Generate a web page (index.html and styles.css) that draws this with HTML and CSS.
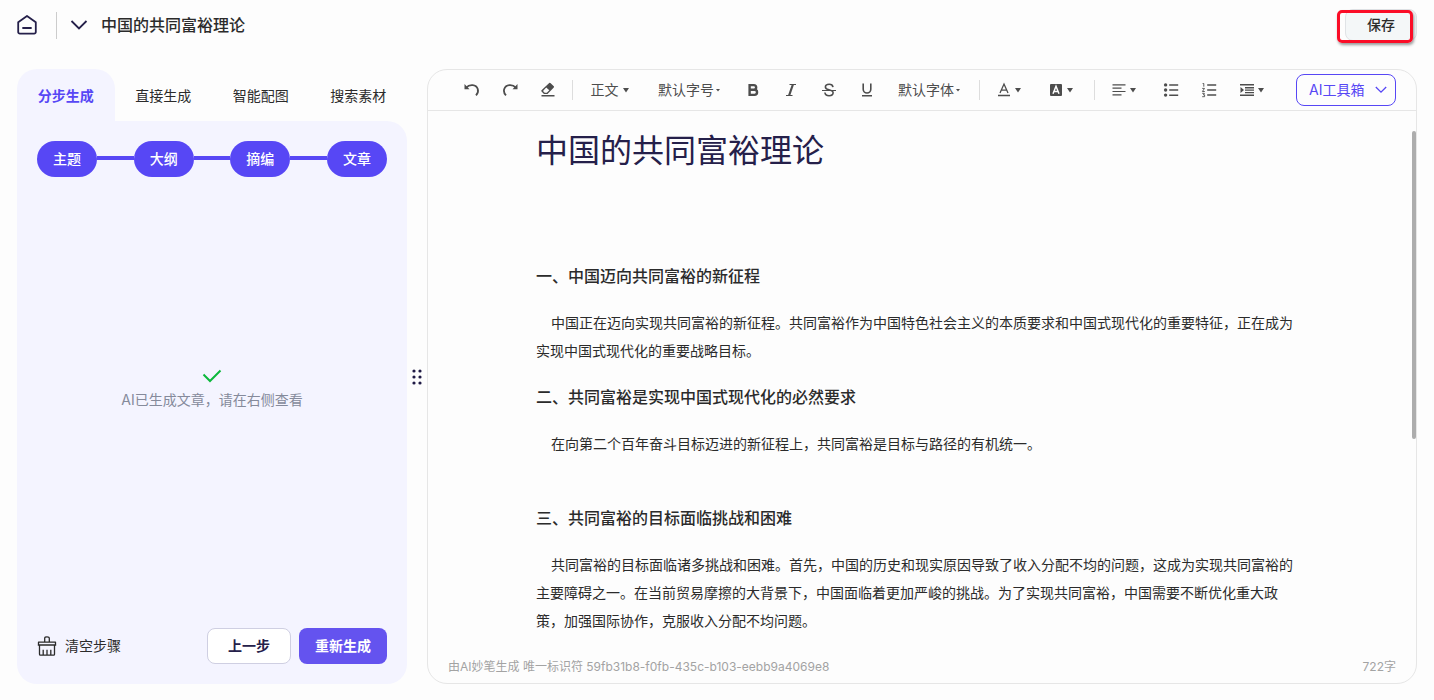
FILE: index.html
```html
<!DOCTYPE html>
<html lang="zh-CN">
<head>
<meta charset="utf-8">
<title>中国的共同富裕理论</title>
<link rel="stylesheet" href="styles.css">
</head>
<body>
<header class="topbar">
  <button class="icon-btn" type="button" aria-label="首页">
    <svg width="20" height="20" viewBox="0 0 20 20" fill="none" stroke="#25204a" stroke-width="1.8" stroke-linejoin="round" stroke-linecap="round"><path d="M1.2 7.3 10 1l8.800 6.300V17a1.600 1.600 0 0 1-1.600 1.600H2.800A1.600 1.600 0 0 1 1.200 17z"/><path d="M6 13h8"/></svg>
  </button>
  <span class="topbar-line"></span>
  <button class="icon-btn" type="button" aria-label="展开">
    <svg width="18" height="12" viewBox="0 0 18 12" fill="none" stroke="#25204a" stroke-width="1.800"><path d="M1.500 2 9 9.500 16.500 2"/></svg>
  </button>
  <h1 class="topbar-title">中国的共同富裕理论</h1>
  <button class="save" type="button">保存<span class="save-mark"></span></button>
</header>

<main class="workspace">
  <section class="side">
    <nav class="tabs">
      <button class="tab tab-active" type="button">分步生成</button>
      <button class="tab" type="button">直接生成</button>
      <button class="tab" type="button">智能配图</button>
      <button class="tab" type="button">搜索素材</button>
    </nav>
    <div class="side-body">
      <div class="steps">
        <button class="step" type="button">主题</button><span class="step-link"></span>
        <button class="step" type="button">大纲</button><span class="step-link"></span>
        <button class="step" type="button">摘编</button><span class="step-link"></span>
        <button class="step" type="button">文章</button>
      </div>
      <div class="status">
        <svg width="20" height="14" viewBox="0 0 20 14" fill="none" stroke="#0cb83c" stroke-width="2"><path d="M1.500 5.500 8 12 18.500 1.500"/></svg>
        <p class="status-text">AI已生成文章，请在右侧查看</p>
      </div>
      <div class="actions">
        <button class="clear" type="button">
          <svg width="20" height="20" viewBox="0 0 20 20" fill="none" stroke="#2b2b2b" stroke-width="1.300" stroke-linejoin="round"><path d="M7.700 6V2.200Q7.700.8 10 .8t2.300 1.400V6"/><path d="M1.500 9V6.200h17V9M.800 9h18.400M2.500 9v9.300q0 .9.900.9h13.200q.9 0 .9-.9V9M6.200 19v-5.200M10 19v-5.200M13.800 19v-5.200"/></svg>
          <span>清空步骤</span>
        </button>
        <button class="btn btn-plain" type="button">上一步</button>
        <button class="btn btn-main" type="button">重新生成</button>
      </div>
    </div>
  </section>

  <div class="handle">
    <svg width="12" height="16" viewBox="0 0 12 16" fill="#1f1a45"><circle cx="3" cy="2" r="1.600"/><circle cx="9" cy="2" r="1.600"/><circle cx="3" cy="8" r="1.600"/><circle cx="9" cy="8" r="1.600"/><circle cx="3" cy="14" r="1.600"/><circle cx="9" cy="14" r="1.600"/></svg>
  </div>

  <section class="editor">
    <div class="toolbar">
      <button class="tool" type="button" aria-label="撤销"><svg width="16" height="16" viewBox="0 0 16 16" fill="none" stroke="#4d4d4d" stroke-width="1.800"><path d="M2 5.800C4 3.600 6.300 3 8.600 3.200c5.400.5 7.200 6.200 3.400 10.200"/><path d="M.5 2v5.200h5z" fill="#4d4d4d" stroke="none"/></svg></button>
      <button class="tool" type="button" aria-label="重做"><svg width="16" height="16" viewBox="0 0 16 16" fill="none" stroke="#4d4d4d" stroke-width="1.800"><path d="M14 5.800C12 3.600 9.700 3 7.400 3.200 2 3.700.200 9.400 4 13.400"/><path d="M15.500 2v5.200h-5z" fill="#4d4d4d" stroke="none"/></svg></button>
      <button class="tool" type="button" aria-label="清除格式"><svg width="16" height="16" viewBox="0 0 16 16" fill="#4d4d4d"><path fill-rule="evenodd" d="M9.200.900q.6-.5 1.200 0l3.400 3.300q.5.600 0 1.200L7.500 12H4L1.500 9.500q-.5-.6 0-1.200zM6.200 5.600 3 8.900l1.700 1.800h2.100l2.500-2.400z"/><path d="M1.500 13h13v1.600h-13z"/></svg></button>
      <span class="tool-line"></span>
      <button class="tool tool-text" type="button">正文<svg width="8" height="5" viewBox="0 0 8 5" fill="#4d4d4d"><path d="M1 0h6L4 4.500z"/></svg></button>
      <button class="tool tool-size" type="button">默认字号<svg width="4" height="3" viewBox="0 0 4 3" fill="#4d4d4d"><path d="M0 0h4L2 2.500z"/></svg></button>
      <button class="tool" type="button" aria-label="加粗"><svg width="16" height="16" viewBox="0 0 16 16" fill="none" stroke="#4d4d4d" stroke-width="2.400"><path d="M4.600 3.100h4.200a2.300 2.300 0 0 1 0 4.700H4.600zM4.600 7.800h4.900a2.500 2.500 0 0 1 0 5.100H4.600z"/></svg></button>
      <button class="tool" type="button" aria-label="斜体"><svg width="16" height="16" viewBox="0 0 16 16" fill="none" stroke="#4d4d4d"><path d="M6.500 2.500h6.500M3 13.500h6.500" stroke-width="1.200"/><path d="M9.900 2.500 6.100 13.500" stroke-width="2.200"/></svg></button>
      <button class="tool" type="button" aria-label="删除线"><svg width="16" height="16" viewBox="0 0 16 16" fill="none" stroke="#4d4d4d" stroke-width="1.600"><path d="M12 5.100C11.700 3.300 10.300 2.300 8.200 2.300c-2.300 0-3.800 1.100-3.800 2.800 0 1.500 1.200 2.200 3.600 2.700 2.700.6 4.100 1.400 4.100 3 0 1.800-1.600 2.900-4 2.900-2.500 0-4-1.200-4.200-3.200"/><path d="M1 8.500h14" stroke-width="1"/></svg></button>
      <button class="tool" type="button" aria-label="下划线"><svg width="16" height="16" viewBox="0 0 16 16" fill="none" stroke="#4d4d4d" stroke-width="1.600"><path d="M4.200 1.500v5.700a3.800 3.800 0 0 0 7.600 0V1.500M3 13.800h10"/></svg></button>
      <button class="tool tool-font" type="button">默认字体<svg width="4" height="3" viewBox="0 0 4 3" fill="#4d4d4d"><path d="M0 0h4L2 2.500z"/></svg></button>
      <span class="tool-line"></span>
      <button class="tool tool-drop" type="button" aria-label="文字颜色"><svg width="14" height="16" viewBox="0 0 14 16" fill="none" stroke="#4d4d4d" stroke-width="1.300"><path d="M3 11 7 2l4 9M4.300 8.200h5.400M1 13.500h12"/></svg><svg width="8" height="5" viewBox="0 0 8 5" fill="#4d4d4d"><path d="M1 0h6L4 4.500z"/></svg></button>
      <button class="tool tool-drop" type="button" aria-label="背景颜色"><svg width="14" height="16" viewBox="0 0 14 16" fill="none"><rect x="1" y="2" width="12" height="12" rx="1" fill="#4d4d4d"/><path d="M4 11.800 7 4.200l3 7.600M5 9.400h4" stroke="#fff" stroke-width="1.500"/></svg><svg width="8" height="5" viewBox="0 0 8 5" fill="#4d4d4d"><path d="M1 0h6L4 4.500z"/></svg></button>
      <span class="tool-line"></span>
      <button class="tool tool-drop" type="button" aria-label="对齐"><svg width="14" height="16" viewBox="0 0 14 16" stroke="#4d4d4d" stroke-width="1.200"><path d="M.500 2.900h13M.500 6.200h9M.500 9.500h13M.500 12.800h9"/></svg><svg width="8" height="5" viewBox="0 0 8 5" fill="#4d4d4d"><path d="M1 0h6L4 4.500z"/></svg></button>
      <button class="tool" type="button" aria-label="无序列表"><svg width="16" height="16" viewBox="0 0 16 16" fill="#4d4d4d"><circle cx="2.600" cy="2.900" r="1.700"/><circle cx="2.600" cy="8" r="1.700"/><circle cx="2.600" cy="13.100" r="1.700"/><path d="M6.200 2.200h9v1.500h-9zM6.200 7.300h9v1.500h-9zM6.200 12.400h9v1.500h-9z"/></svg></button>
      <button class="tool" type="button" aria-label="有序列表"><svg width="16" height="16" viewBox="0 0 16 16" fill="none" stroke="#4d4d4d"><path d="M6.200 2.900h9M6.200 8h9M6.200 13.100h9" stroke-width="1.500"/><path d="M1.600 1.500h1.200v3.200M1.200 6.400h2.300L1.400 9.500h2.400M1.200 11.300h2.200L2.400 12.800h1.200v1.900H1.200" stroke-width=".9"/></svg></button>
      <button class="tool tool-drop" type="button" aria-label="缩进"><svg width="14" height="16" viewBox="0 0 14 16" fill="#4d4d4d"><path d="M0 2h14v1.600H0zM5 5.100h9v1.300H5zM5 7.500h9v1.300H5zM5 9.900h9v1.300H5zM0 12.500h14v1.600H0zM.500 5v6L4 8z"/></svg><svg width="8" height="5" viewBox="0 0 8 5" fill="#4d4d4d"><path d="M1 0h6L4 4.500z"/></svg></button>
      <button class="ai" type="button">AI工具箱<svg width="12" height="8" viewBox="0 0 12 8" fill="none" stroke="#5747f5" stroke-width="1.300"><path d="M.800 1 6 6.200 11.200 1"/></svg></button>
    </div>
    <article class="doc">
      <h2 class="doc-title">中国的共同富裕理论</h2>
      <h3 class="doc-heading">一、中国迈向共同富裕的新征程</h3>
      <p class="doc-text">中国正在迈向实现共同富裕的新征程。共同富裕作为中国特色社会主义的本质要求和中国式现代化的重要特征，正在成为实现中国式现代化的重要战略目标。</p>
      <h3 class="doc-heading">二、共同富裕是实现中国式现代化的必然要求</h3>
      <p class="doc-text doc-text-spaced">在向第二个百年奋斗目标迈进的新征程上，共同富裕是目标与路径的有机统一。</p>
      <h3 class="doc-heading">三、共同富裕的目标面临挑战和困难</h3>
      <p class="doc-text">共同富裕的目标面临诸多挑战和困难。首先，中国的历史和现实原因导致了收入分配不均的问题，这成为实现共同富裕的主要障碍之一。在当前贸易摩擦的大背景下，中国面临着更加严峻的挑战。为了实现共同富裕，中国需要不断优化重大政策，加强国际协作，克服收入分配不均问题。</p>
    </article>
    <footer class="editor-foot"><span>由AI妙笔生成 唯一标识符 59fb31b8-f0fb-435c-b103-eebb9a4069e8</span><span>722字</span></footer>
    <span class="thumb"></span>
  </section>
</main>
</body>
</html>
```
FILE: styles.css
```css
* { box-sizing: border-box; }
body {
  margin: 0;
  height: 100vh;
  display: flex;
  flex-direction: column;
  padding: 0 17px 16px;
  background: #fdfdfd;
  color: #2b2b2b;
  font: 14px/20px "Inter", "Noto Sans CJK SC", sans-serif;
}
h1, h2, h3, p { margin: 0; }
button {
  margin: 0;
  padding: 0;
  border: 0;
  background: none;
  color: inherit;
  font: inherit;
  cursor: pointer;
}
svg { display: block; flex: none; }

.topbar { display: flex; align-items: center; height: 50px; flex: none; }
.icon-btn { display: flex; }
.topbar-line { width: 1px; height: 27px; margin: 0 13px 0 19px; background: #ccc; }
.topbar-title { margin-left: 13px; font-size: 16px; line-height: 24px; font-weight: 500; }
.save {
  position: relative;
  width: 72px;
  height: 32px;
  margin-left: auto;
  border: 1px solid #e0e3e6;
  border-radius: 8px;
  background: #f4f7f8;
  font-weight: 500;
}
.save-mark {
  position: absolute;
  inset: 0 3px -3px -9px;
  border: 3px solid #fb0d27;
  border-radius: 5px;
  box-shadow: 1px 2px 3px #0006;
}

.workspace { flex: 1; min-height: 0; display: flex; margin-top: 19px; }
.side { width: 390px; flex: none; display: flex; flex-direction: column; }
.tabs { display: flex; }
.tab { flex: 1; height: 52px; padding-top: 2px; }
.tab-active {
  border-radius: 20px 20px 0 0;
  background: #f4f4ff;
  color: #5747f5;
  font-weight: 700;
}
.side-body {
  flex: 1;
  display: flex;
  flex-direction: column;
  padding: 20px;
  border-radius: 0 20px 20px 20px;
  background: #f4f4ff;
}
.steps { display: flex; align-items: center; }
.step {
  width: 60px;
  height: 36px;
  border-radius: 18px;
  background: #5747f5;
  color: #fff;
  font-weight: 500;
}
.step-link { flex: 1; height: 4px; margin-bottom: 2px; background: #5747f5; }
.status {
  flex: 1;
  display: flex;
  flex-direction: column;
  align-items: center;
  justify-content: center;
  gap: 7px;
  padding-bottom: 26px;
}
.status-text { color: #858a9b; }
.actions { display: flex; align-items: center; gap: 8px; }
.clear { display: flex; align-items: center; gap: 8px; margin-right: auto; }
.btn { height: 36px; border-radius: 8px; font-weight: 700; }
.btn-plain { width: 84px; border: 1px solid #cfcfe2; background: #fff; color: #25204a; }
.btn-main { width: 88px; background: #6453ef; color: #fff; }

.handle { width: 20px; flex: none; display: flex; align-items: center; justify-content: center; }

.editor {
  position: relative;
  flex: 1;
  min-width: 0;
  display: flex;
  flex-direction: column;
  overflow: hidden;
  border: 1px solid #e6e6e6;
  border-radius: 20px;
}
.toolbar {
  display: flex;
  align-items: center;
  height: 41px;
  flex: none;
  padding: 0 20px 0 25px;
  border-bottom: 1px solid #e6e6e6;
  color: #4d4d4d;
}
.tool {
  display: flex;
  align-items: center;
  justify-content: center;
  width: 38px;
  height: 32px;
  flex: none;
  white-space: nowrap;
}
.tool-text { width: 66px; gap: 3px; padding-right: 2px; }
.tool-size { width: 90px; gap: 2px; }
.tool-font { width: 88px; gap: 2px; padding-right: 2px; }
.tool-drop { width: 52px; gap: 3px; padding-right: 3px; }
.tool-line { width: 1px; height: 20px; margin: 0 5px; background: #ddd; flex: none; }
.ai {
  display: flex;
  align-items: center;
  justify-content: space-between;
  width: 100px;
  height: 32px;
  margin-left: auto;
  padding: 0 8px 0 12px;
  border: 1px solid #5747f5;
  border-radius: 8px;
  color: #5747f5;
}
.doc { flex: 1; min-height: 0; overflow: hidden; padding: 16px 116px 0 108px; }
.doc-title {
  margin-bottom: 89px;
  color: #25204a;
  font-size: 32px;
  line-height: 48px;
  font-weight: 400;
}
.doc-heading { margin-bottom: 20px; font-size: 16px; line-height: 25px; font-weight: 500; }
.doc-text { margin-bottom: 20px; line-height: 28px; text-indent: 15px; }
.doc-text-spaced { margin-bottom: 48px; }
.editor-foot {
  display: flex;
  justify-content: space-between;
  flex: none;
  padding: 7px 20px 6px;
  color: #a3a3a3;
  font-size: 12px;
}
.thumb {
  position: absolute;
  top: 61px;
  right: 0;
  width: 4px;
  height: 308px;
  border-radius: 2px;
  background: #adadad;
}
```
